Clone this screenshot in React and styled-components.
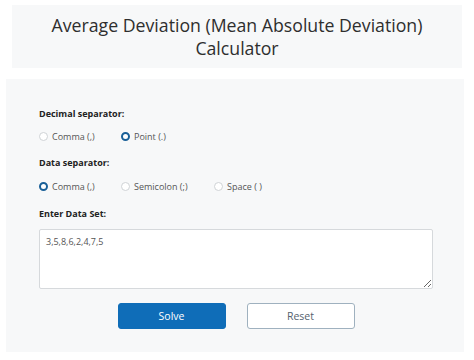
import React from 'react';
import styled, { createGlobalStyle } from 'styled-components';

const GlobalStyle = createGlobalStyle`
  body {
    margin: 0;
    background: #ffffff;
    font-family: "Open Sans", "Noto Sans", sans-serif;
  }
`;

const Page = styled.div`
  width: 474px;
  height: 360px;
  display: flex;
  flex-direction: column;
`;

const Header = styled.header`
  margin: 5px 12px 0 12px;
  height: 63px;
  background: #f7f8f9;
  display: flex;
  align-items: center;
  justify-content: center;
`;

const Title = styled.h1`
  margin: 0;
  font-size: 17.7px;
  font-weight: 500;
  line-height: 23px;
  color: #2e2e2e;
  text-align: center;
`;

const Panel = styled.section`
  margin: 11px 0 0 6px;
  width: 458px;
  height: 273px;
  box-sizing: border-box;
  background: #f7f8f9;
  padding: 28px 31px 0 33px;
  display: flex;
  flex-direction: column;
`;

const Label = styled.div`
  font-size: 9px;
  font-weight: 700;
  line-height: 14px;
  color: #222;
  margin-top: ${(p) => p.$top || 0}px;
`;

const RadioRow = styled.div`
  display: grid;
  grid-template-columns: 82px 93px auto;
  height: 16px;
  align-items: center;
  margin-top: ${(p) => p.$top || 0}px;
`;

const Option = styled.label`
  display: flex;
  align-items: center;
  gap: 4px;
  font-size: 9px;
  color: #555;
`;

const Radio = styled.span`
  width: 9px;
  height: 9px;
  box-sizing: border-box;
  border-radius: 50%;
  background: #fff;
  border: ${(p) => (p.$on ? '2.5px solid #1a6098' : '1px solid #cfd3d6')};
  flex: none;
`;

const DataBox = styled.textarea`
  margin-top: 8px;
  width: 394px;
  height: 60px;
  box-sizing: border-box;
  border: 1px solid #d6d9dc;
  border-radius: 2px;
  padding: 5px 6px;
  font-family: "Open Sans", "Noto Sans", sans-serif;
  font-size: 9px;
  color: #555;
  background: #fff;
  resize: vertical;
  outline: none;
`;

const Actions = styled.div`
  margin-top: 14px;
  display: flex;
  justify-content: center;
  gap: 21px;
  width: 394px;
`;

const Button = styled.button`
  width: 108px;
  height: 26px;
  box-sizing: border-box;
  border-radius: 3px;
  font-family: "Open Sans", "Noto Sans", sans-serif;
  font-size: 10.5px;
  cursor: pointer;
  background: ${(p) => (p.$primary ? '#0f6db8' : '#ffffff')};
  color: ${(p) => (p.$primary ? '#ffffff' : '#55626e')};
  border: 1px solid ${(p) => (p.$primary ? '#0f6db8' : '#9fb1bf')};
`;

const RadioOption = ({ on, children }) => (
  <Option>
    <Radio $on={on} />
    {children}
  </Option>
);

export default function App() {
  return (
    <Page>
      <GlobalStyle />
      <Header>
        <Title>
          Average Deviation (Mean Absolute Deviation)
          <br />
          Calculator
        </Title>
      </Header>
      <Panel>
        <Label>Decimal separator:</Label>
        <RadioRow $top={7}>
          <RadioOption>Comma (,)</RadioOption>
          <RadioOption on>Point (.)</RadioOption>
        </RadioRow>
        <Label $top={12}>Data separator:</Label>
        <RadioRow $top={8}>
          <RadioOption on>Comma (,)</RadioOption>
          <RadioOption>Semicolon (;)</RadioOption>
          <RadioOption>Space ( )</RadioOption>
        </RadioRow>
        <Label $top={13}>Enter Data Set:</Label>
        <DataBox defaultValue="3,5,8,6,2,4,7,5" />
        <Actions>
          <Button $primary>Solve</Button>
          <Button>Reset</Button>
        </Actions>
      </Panel>
    </Page>
  );
}
